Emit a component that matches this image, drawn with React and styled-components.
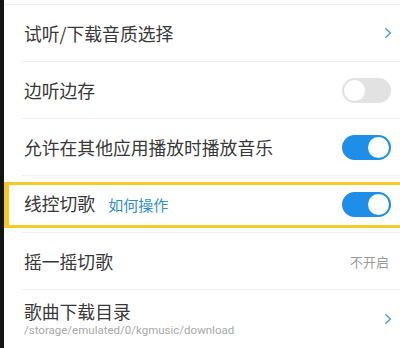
import React from "react";
import styled, { createGlobalStyle } from "styled-components";

const Global = createGlobalStyle`
  html, body { margin: 0; padding: 0; background: #fff; }
  body { width: 400px; height: 348px; overflow: hidden; }
  * { box-sizing: border-box; }
`;

const Screen = styled.div`
  width: 400px;
  height: 348px;
  display: flex;
  background: #fff;
  font-family: "Noto Sans CJK SC", "Noto Sans", sans-serif;
  overflow: hidden;
`;

const EdgeBar = styled.div`
  width: 4px;
  flex: none;
  background: #141414;
`;

const List = styled.div`
  flex: 1;
  display: flex;
  flex-direction: column;
  padding-top: 4px;
`;

const TopRule = styled.div`
  height: 1px;
  background: #ececec;
`;

const Row = styled.div`
  position: relative;
  height: 57px;
  flex: none;
  display: flex;
  align-items: center;
  margin-left: 18px;
  padding-right: 9px;
  border-bottom: ${(p) => (p.$last ? "none" : "1px solid #efefef")};
`;

const Label = styled.div`
  flex: 1;
  display: flex;
  flex-direction: column;
  justify-content: center;
  min-width: 0;
  padding-left: 2px;
`;

const Title = styled.div`
  display: flex;
  align-items: baseline;
  font-size: 17.8px;
  line-height: 22px;
  color: #383838;
  white-space: nowrap;
`;

const Link = styled.span`
  font-size: 15px;
  color: #2f8fd6;
  margin-left: 13px;
`;

const Sub = styled.div`
  font-family: Roboto, "Liberation Sans", sans-serif;
  font-size: 11.5px;
  line-height: 16px;
  color: #a8a8a8;
  white-space: nowrap;
`;

const Value = styled.span`
  font-size: 13px;
  color: #9a9a9a;
  margin-right: 2px;
`;

const Toggle = styled.div`
  width: 49px;
  height: 25px;
  border-radius: 13px;
  background: ${(p) => (p.$on ? "#1f8ee8" : "#e2e2e2")};
  display: flex;
  align-items: center;
  justify-content: ${(p) => (p.$on ? "flex-end" : "flex-start")};
  padding: 0 2px;
`;

const Knob = styled.div`
  width: 21px;
  height: 21px;
  border-radius: 50%;
  background: #fff;
`;

const Chevron = styled.svg`
  width: 8px;
  height: 12px;
  margin-right: -1px;
`;

const Highlight = styled.div`
  position: absolute;
  left: -18px;
  right: -6px;
  top: 6px;
  bottom: 4px;
  border: 3px solid #f6c927;
  border-left-width: 5px;
  pointer-events: none;
`;

const Arrow = () => (
  <Chevron viewBox="0 0 8 12">
    <path d="M1.5 1.2 L6.3 6 L1.5 10.8" fill="none" stroke="#4aa0de" strokeWidth="1.5" />
  </Chevron>
);

export default function App() {
  return (
    <Screen>
      <Global />
      <EdgeBar />
      <List>
        <TopRule />
        <Row>
          <Label><Title>试听/下载音质选择</Title></Label>
          <Arrow />
        </Row>
        <Row>
          <Label><Title>边听边存</Title></Label>
          <Toggle><Knob /></Toggle>
        </Row>
        <Row>
          <Label><Title>允许在其他应用播放时播放音乐</Title></Label>
          <Toggle $on><Knob /></Toggle>
        </Row>
        <Row>
          <Highlight />
          <Label>
            <Title>线控切歌<Link>如何操作</Link></Title>
          </Label>
          <Toggle $on><Knob /></Toggle>
        </Row>
        <Row>
          <Label><Title>摇一摇切歌</Title></Label>
          <Value>不开启</Value>
        </Row>
        <Row $last>
          <Label>
            <Title>歌曲下载目录</Title>
            <Sub>/storage/emulated/0/kgmusic/download</Sub>
          </Label>
          <Arrow />
        </Row>
      </List>
    </Screen>
  );
}
